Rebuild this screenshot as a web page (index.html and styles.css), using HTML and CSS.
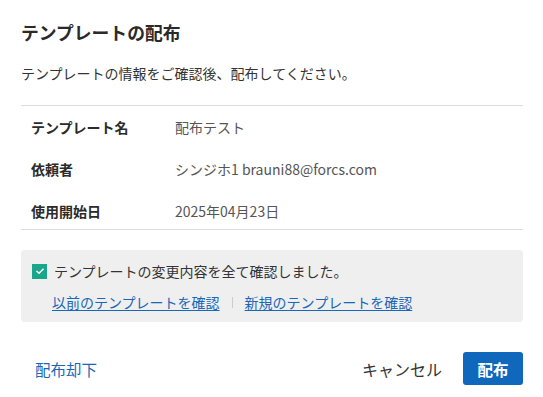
FILE: index.html
```html
<!DOCTYPE html>
<html lang="ja">
<head>
  <meta charset="UTF-8">
  <title>テンプレートの配布</title>
  <link rel="stylesheet" href="styles.css">
</head>
<body>
  <div class="dialog">
    <h2 class="title">テンプレートの配布</h2>
    <p class="lead">テンプレートの情報をご確認後、配布してください。</p>

    <div class="info">
      <div class="row">
        <div class="label">テンプレート名</div>
        <div class="value">配布テスト</div>
      </div>
      <div class="row">
        <div class="label">依頼者</div>
        <div class="value">シンジホ1 brauni88@forcs.com</div>
      </div>
      <div class="row">
        <div class="label">使用開始日</div>
        <div class="value">2025年04月23日</div>
      </div>
    </div>

    <div class="confirm">
      <label class="check">
        <span class="box">
          <svg width="10" height="8" viewBox="0 0 10 8"><path d="M1.5 4 L4 6.3 L8.5 1.7" fill="none" stroke="#fff" stroke-width="1.4"/></svg>
        </span>
        テンプレートの変更内容を全て確認しました。
      </label>
      <div class="links">
        <a href="#">以前のテンプレートを確認</a>
        <span class="sep"></span>
        <a href="#">新規のテンプレートを確認</a>
      </div>
    </div>

    <div class="footer">
      <button class="reject">配布却下</button>
      <div class="actions">
        <button class="cancel">キャンセル</button>
        <button class="primary">配布</button>
      </div>
    </div>
  </div>
</body>
</html>
```
FILE: styles.css
```css
body {
  margin: 0;
  background: #fff;
  font-family: "Noto Sans CJK JP", "Noto Sans", sans-serif;
  color: #2b2b2b;
}
.dialog {
  padding: 0 20px 0 21px;
}
.title {
  margin: 0;
  padding-top: 20px;
  font-size: 17.8px;
  line-height: 24px;
  font-weight: bold;
  color: #2a2a2a;
}
.lead {
  margin: 19px 0 0;
  font-size: 14px;
  line-height: 20px;
  color: #333;
}
.info {
  margin-top: 22px;
  border-top: 1px solid #dcdcdc;
  border-bottom: 1px solid #dcdcdc;
  padding: 3px 0 0;
  display: flex;
  flex-direction: column;
  gap: 6px;
}
.row {
  display: flex;
  height: 36px;
  align-items: center;
  font-size: 14px;
}
.label {
  width: 144px;
  padding-left: 10px;
  font-weight: bold;
  color: #2b2b2b;
}
.value {
  color: #555;
}
.confirm {
  margin-top: 20px;
  background: #efefef;
  border-radius: 4px;
  padding: 11px 10px 10px 11px;
}
.check {
  display: flex;
  align-items: center;
  gap: 7px;
  font-size: 14px;
  line-height: 20px;
  color: #333;
}
.box {
  width: 15px;
  height: 15px;
  background: #1ba68c;
  display: flex;
  align-items: center;
  justify-content: center;
}
.links {
  margin-top: 11px;
  padding-left: 20px;
  display: flex;
  align-items: center;
  font-size: 14px;
  line-height: 20px;
}
.links a {
  color: #1a67b8;
  text-decoration: underline;
  text-underline-offset: 2px;
}
.sep {
  width: 1px;
  height: 11px;
  background: #ccc;
  margin: 0 12px;
}
.footer {
  margin-top: 30px;
  display: flex;
  justify-content: space-between;
  align-items: center;
}
button {
  font-family: inherit;
  border: none;
  background: none;
  cursor: pointer;
}
.reject {
  padding: 0 0 0 14px;
  font-size: 15.5px;
  color: #1a67b8;
}
.actions {
  display: flex;
  align-items: center;
  gap: 21px;
}
.cancel {
  font-size: 16px;
  color: #333;
  padding: 0;
}
.primary {
  width: 60px;
  height: 33px;
  border-radius: 3px;
  background: #1068bd;
  color: #fff;
  font-size: 15.5px;
  font-weight: bold;
}
```
